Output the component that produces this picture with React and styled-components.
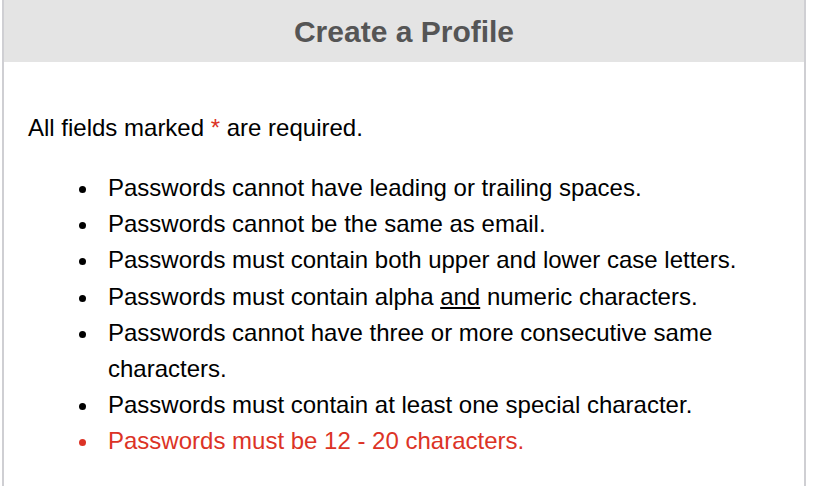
import React from "react";
import styled, { createGlobalStyle } from "styled-components";

const Global = createGlobalStyle`
  html, body { margin: 0; padding: 0; background: #ffffff; }
  body { font-family: "Liberation Sans", Arial, Helvetica, sans-serif; }
`;

const Panel = styled.section`
  box-sizing: border-box;
  width: 804px;
  margin-left: 2px;
  min-height: 486px;
  border-left: 2px solid #cfcfd3;
  border-right: 2px solid #cfcfd3;
  background: #ffffff;
`;

const Header = styled.header`
  height: 62px;
  background: #e4e4e4;
  display: flex;
  align-items: center;
  justify-content: center;
`;

const Title = styled.h1`
  margin: 2px 0 0;
  font-size: 30px;
  font-weight: 700;
  color: #555555;
  line-height: 1;
`;

const Body = styled.div`
  padding: 48px 24px 0;
  color: #000000;
  font-size: 24px;
  line-height: 36.15px;
`;

const Note = styled.p`
  margin: 0;
`;

const Req = styled.span`
  color: #dc3326;
`;

const Rules = styled.ul`
  margin: 24px 0 0;
  padding-left: 80px;
  list-style: none;
`;

const Rule = styled.li`
  position: relative;
  color: ${(p) => (p.$error ? "#dc3326" : "#000000")};

  &::before {
    content: "";
    position: absolute;
    left: -29px;
    top: 16px;
    width: 7px;
    height: 7px;
    border-radius: 50%;
    background: currentColor;
  }
`;

const rules = [
  { text: "Passwords cannot have leading or trailing spaces." },
  { text: "Passwords cannot be the same as email." },
  { text: "Passwords must contain both upper and lower case letters." },
  {
    text: (
      <>
        Passwords must contain alpha <u>and</u> numeric characters.
      </>
    ),
  },
  { text: "Passwords cannot have three or more consecutive same characters." },
  { text: "Passwords must contain at least one special character." },
  { text: "Passwords must be 12 - 20 characters.", error: true },
];

export default function App() {
  return (
    <>
      <Global />
      <Panel>
        <Header>
          <Title>Create a Profile</Title>
        </Header>
        <Body>
          <Note>
            All fields marked <Req>*</Req> are required.
          </Note>
          <Rules>
            {rules.map((r, i) => (
              <Rule key={i} $error={r.error}>
                {r.text}
              </Rule>
            ))}
          </Rules>
        </Body>
      </Panel>
    </>
  );
}
